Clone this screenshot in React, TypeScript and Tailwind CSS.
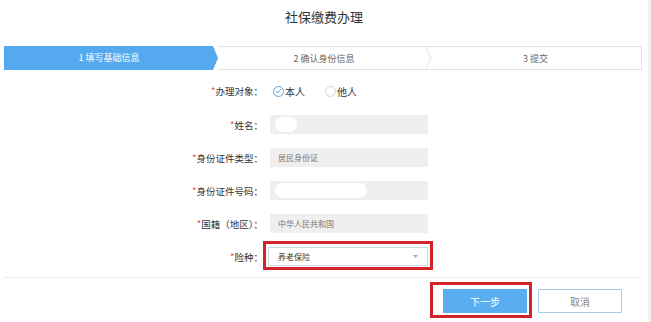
import React from 'react'

const font = { fontFamily: '"Noto Sans CJK SC", "Noto Sans", sans-serif' }

const Label = ({ text }: { text: string }) => (
  <div className="w-[263px] shrink-0 text-right text-[9.5px] leading-[12px] text-[#333]">
    <span className="text-[#e8453c]">*</span>
    {text}
  </div>
)

const GrayInput = ({ value, blob }: { value?: string; blob?: string }) => (
  <div className="relative ml-[7px] flex h-[19px] w-[158px] items-center bg-[#efefef] pl-[8px] text-[8px] text-[#777]">
    {blob && <div className={`absolute top-[2px] left-[5px] h-[15px] rounded-full bg-white ${blob}`} />}
    {value}
  </div>
)

const Steps = () => (
  <div className="ml-[4px] flex h-[24px] w-[638px] text-[9px] leading-[24px]">
    <div className="w-[214px] shrink-0 bg-[#55a9ee] text-center text-white [clip-path:polygon(0_0,209px_0,214px_50%,209px_100%,0_100%)]">
      <span className="pr-[4px]">1 填写基础信息</span>
    </div>
    <div className="relative w-[212px] shrink-0 border-y border-[#e2e2e2] text-center text-[#666]">
      2 确认身份信息
      <svg className="absolute -top-px right-[-2px]" width="7" height="24" viewBox="0 0 7 24">
        <polyline points="0.5,0 6,12 0.5,24" fill="none" stroke="#e4e4e4" strokeWidth="1" />
      </svg>
    </div>
    <div className="flex-1 border-y border-r border-[#e2e2e2] text-center text-[#666]">3 提交</div>
  </div>
)

export default function App() {
  return (
    <div className="flex h-[322px] w-[651px] overflow-hidden bg-white" style={font}>
      <div className="flex w-[648px] flex-col">
        <div className="pt-[9px] text-center text-[13px] leading-[16px] text-[#333]">社保缴费办理</div>

        <div className="mt-[21px]">
          <Steps />
        </div>

        <div className="mt-[11px] flex flex-col gap-[14px]">
          <div className="flex h-[20px] items-center">
            <Label text="办理对象：" />
            <div className="ml-[10px] flex items-center text-[10px] text-[#333]">
              <span className="flex h-[11px] w-[11px] items-center justify-center rounded-full border border-[#5aa6e4]">
                <svg width="7" height="6" viewBox="0 0 7 6">
                  <polyline points="0.8,3 2.8,5 6.2,0.8" fill="none" stroke="#4a9ce0" strokeWidth="1" />
                </svg>
              </span>
              <span className="ml-[1px]">本人</span>
              <span className="ml-[20px] h-[11px] w-[11px] rounded-full border border-[#d4d4d4]" />
              <span className="ml-[1px]">他人</span>
            </div>
          </div>

          <div className="flex items-center">
            <Label text="姓名：" />
            <GrayInput blob="w-[22px]" />
          </div>

          <div className="flex items-center">
            <Label text="身份证件类型：" />
            <GrayInput value="居民身份证" />
          </div>

          <div className="flex items-center">
            <Label text="身份证件号码：" />
            <GrayInput blob="w-[92px] left-[2px]" />
          </div>

          <div className="flex items-center">
            <Label text="国籍（地区）：" />
            <GrayInput value="中华人民共和国" />
          </div>

          <div className="flex items-center">
            <Label text="险种：" />
            <div className="relative ml-[5px] flex h-[19px] w-[160px] items-center justify-between border border-[#cfd8e0] bg-white pr-[9px] pl-[9px] text-[8px] text-[#333]">
              养老保险
              <svg width="5" height="3" viewBox="0 0 5 3">
                <polygon points="0,0 5,0 2.5,3" fill="#aaa" />
              </svg>
              <span className="absolute -top-[7px] -right-[6px] -bottom-[5px] -left-[6px] border-[3px] border-[#d3232a]" />
            </div>
          </div>
        </div>

        <div className="mt-[11px] ml-[4px] w-[638px] border-t border-[#ececec]" />

        <div className="mt-[11px] flex justify-end gap-[11px] pr-[26px]">
          <div className="relative flex h-[24px] w-[84px] items-center justify-center bg-[#5aaef0] text-[10px] text-white">
            下一步
            <span className="absolute -top-[7px] -right-[5px] -bottom-[5px] -left-[13px] border-[3px] border-[#d3232a]" />
          </div>
          <div className="flex h-[24px] w-[84px] items-center justify-center border border-[#a9cde2] text-[10px] text-[#8a8a8a]">
            取消
          </div>
        </div>
      </div>
      <div className="w-[3px] bg-[#f1f1f1]" />
    </div>
  )
}
